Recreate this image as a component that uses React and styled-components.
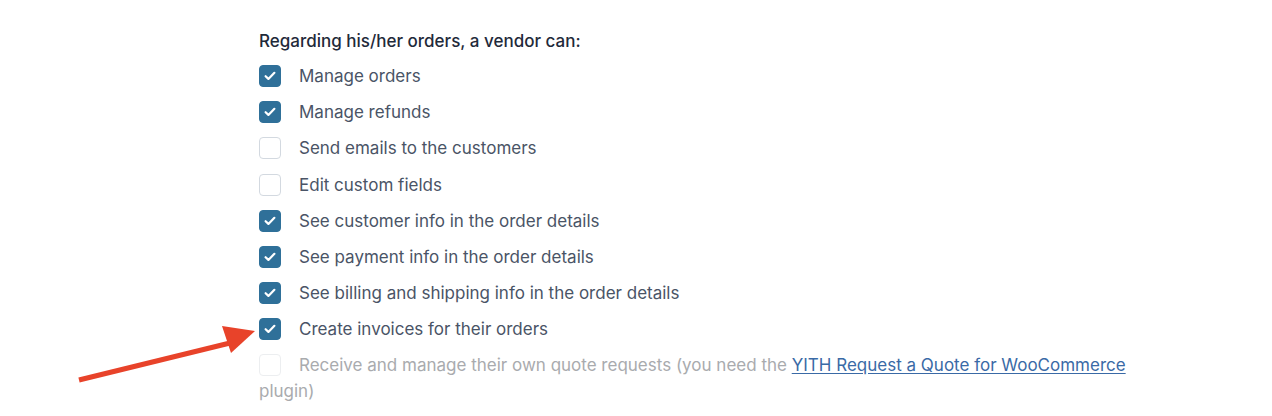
import React from "react";
import styled, { createGlobalStyle } from "styled-components";

const GlobalStyle = createGlobalStyle`
  body {
    margin: 0;
    background: #ffffff;
    font-family: Inter, "Noto Sans", "Liberation Sans", sans-serif;
    -webkit-font-smoothing: antialiased;
  }
`;

const Page = styled.div`
  position: relative;
  height: 416px;
  overflow: hidden;
  padding: 28px 0 0 259px;
  box-sizing: border-box;
`;

const Section = styled.div`
  display: flex;
  flex-direction: column;
  gap: 10.15px;
  width: 890px;
`;

const Heading = styled.div`
  font-size: 17px;
  line-height: 26px;
  font-weight: 500;
  color: #1f2a3a;
  margin-bottom: -1px;
`;

const Row = styled.label`
  display: block;
  font-size: 17px;
  line-height: 26px;
  color: ${(p) => (p.disabled ? "#a9abae" : "#4a5466")};
`;

const Box = styled.span`
  display: inline-grid;
  place-items: center;
  width: 22px;
  height: 22px;
  box-sizing: border-box;
  border-radius: 4px;
  margin: 2px 18px 0 0;
  vertical-align: top;
  background: ${(p) => (p.checked ? "#2f7099" : "#ffffff")};
  border: 1px solid
    ${(p) => (p.checked ? "#2f7099" : p.disabled ? "#eceef0" : "#d3d9e0")};
`;

const Link = styled.a`
  color: #3a6aa6;
  text-decoration: underline;
  text-underline-offset: 2px;
`;

const Arrow = styled.svg`
  position: absolute;
  left: 70px;
  top: 318px;
`;

const Check = () => (
  <svg width="12" height="10" viewBox="0 0 12 10">
    <path
      d="M1.6 5.2 L4.4 7.9 L10.4 1.8"
      fill="none"
      stroke="#fff"
      strokeWidth="2.2"
      strokeLinecap="round"
      strokeLinejoin="round"
    />
  </svg>
);

const items = [
  { label: "Manage orders", checked: true },
  { label: "Manage refunds", checked: true },
  { label: "Send emails to the customers", checked: false },
  { label: "Edit custom fields", checked: false },
  { label: "See customer info in the order details", checked: true },
  { label: "See payment info in the order details", checked: true },
  { label: "See billing and shipping info in the order details", checked: true },
  { label: "Create invoices for their orders", checked: true },
];

export default function App() {
  return (
    <>
      <GlobalStyle />
      <Page>
        <Section>
          <Heading>Regarding his/her orders, a vendor can:</Heading>
          {items.map((it) => (
            <Row key={it.label}>
              <Box checked={it.checked}>{it.checked && <Check />}</Box>
              {it.label}
            </Row>
          ))}
          <Row disabled>
            <Box disabled />
            Receive and manage their own quote requests (you need the{" "}
            <Link href="#">YITH Request a Quote for WooCommerce</Link> plugin)
          </Row>
          <Row disabled>
            <Box disabled />
          </Row>
        </Section>
        <Arrow width="200" height="80" viewBox="0 0 200 80">
          <path d="M9 62 L160 25" stroke="#e8432a" strokeWidth="5" />
          <path d="M185 13 L152 8 L161 35 Z" fill="#e8432a" />
        </Arrow>
      </Page>
    </>
  );
}
